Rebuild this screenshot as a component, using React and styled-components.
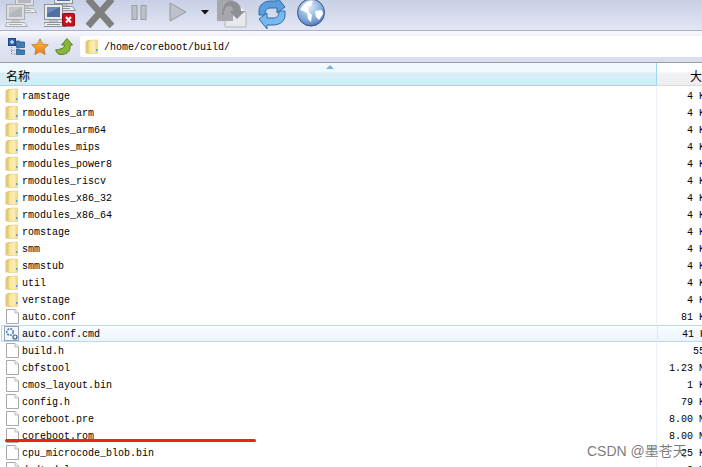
import React from 'react'
import styled, { createGlobalStyle } from 'styled-components'

const GlobalStyle = createGlobalStyle`
  html, body {
    margin: 0;
    padding: 0;
    background: #fff;
    overflow: hidden;
  }
`

const Page = styled.div`
  position: relative;
  width: 702px;
  height: 467px;
  overflow: hidden;
  font-family: "Liberation Mono", "Noto Sans CJK SC", monospace;
  font-size: 10px;
  color: #000;
`

const Toolbar = styled.div`
  height: 30px;
  padding-left: 2px;
  display: flex;
  align-items: flex-end;
  overflow: hidden;
  background: linear-gradient(#c7d0e5, #e3e6f4);
  border-bottom: 1px solid #aab0cc;
`

const Tool = styled.div`
  width: ${p => p.$w}px;
  height: 30px;
  flex: none;
  display: flex;
  justify-content: center;
  align-items: flex-start;
`

const NavBar = styled.div`
  height: 31px;
  padding-left: 8px;
  display: flex;
  align-items: center;
  background: linear-gradient(#f9fafe 0, #e3e6f3 35%, #d9deee 100%);
  border-bottom: 1px solid #9c9ca2;
`

const NavIcons = styled.div`
  display: flex;
  gap: 6px;
  width: 72px;
  flex: none;
  align-items: center;
`

const Location = styled.div`
  flex: 1;
  height: 21px;
  padding-left: 5px;
  display: flex;
  align-items: center;
  gap: 6px;
  background: #fff;
  border-radius: 3px 0 0 3px;
  font-size: 10px;
`

const Label = styled.span`
  padding-top: 2px;
  line-height: 15px;
`

const Header = styled.div`
  height: 23px;
  display: flex;
  position: relative;
  box-sizing: border-box;
`

const NameHead = styled.div`
  width: 657px;
  flex: none;
  box-sizing: border-box;
  padding: 4px 0 0 6px;
  font-family: "Noto Sans CJK SC", sans-serif;
  font-size: 12px;
  line-height: 17px;
  background: linear-gradient(#f1f9fd 0, #eff8fc 42%, #d8eff8 44%, #d2ebf6 100%);
  border-bottom: 1px solid #9dd8ef;
  border-right: 1px solid #9dd8ef;
`

const SizeHead = styled.div`
  flex: 1;
  box-sizing: border-box;
  padding: 4px 0 0 33px;
  font-family: "Noto Sans CJK SC", sans-serif;
  font-size: 12px;
  line-height: 17px;
  white-space: nowrap;
  overflow: hidden;
  background: linear-gradient(#fff 0, #fff 42%, #f3f3f5 44%, #eeeef1 100%);
  border-bottom: 1px solid #d8dade;
`

const SortArrow = styled.div`
  position: absolute;
  left: 326px;
  top: 2px;
  width: 0;
  height: 0;
  border-left: 4px solid transparent;
  border-right: 4px solid transparent;
  border-bottom: 4px solid #7fb2d4;
`

const List = styled.div`
  padding-top: 1px;
`

const Row = styled.div`
  height: 17px;
  display: flex;
  align-items: center;
  box-sizing: border-box;
  white-space: nowrap;
  ${p => p.$selected && `
    margin-left: 1px;
    border: 1px solid #b9d7fb;
    border-right: none;
    border-radius: 2px 0 0 2px;
    background: linear-gradient(#fbfdff, #ebf4fe);
  `}
`

const NameCell = styled.div`
  width: 657px;
  height: 17px;
  flex: none;
  margin-left: ${p => (p.$selected ? -1 : 0)}px;
  box-sizing: border-box;
  padding-left: ${p => (p.$folder ? 5 : p.$selected ? 3 : 6)}px;
  display: flex;
  align-items: center;
  gap: ${p => (p.$folder ? 4 : 3)}px;
  border-right: 1px solid ${p => (p.$selected ? '#dfe8f6' : '#eff1f8')};
`

const SizeCell = styled(Label)`
  width: 60px;
  flex: none;
  text-align: right;
`

const RedLine = styled.div`
  position: absolute;
  left: 5px;
  top: 439px;
  width: 251px;
  height: 3px;
  background: #f0211c;
  border-radius: 2px;
`

const Watermark = styled.div`
  position: absolute;
  left: 587px;
  top: 442px;
  font-family: "Liberation Sans", "Noto Sans CJK SC", sans-serif;
  font-size: 14px;
  line-height: 18px;
  color: rgba(70, 70, 70, 0.72);
  white-space: nowrap;
`

const Monitor = ({ x, y, gray }) => {
  const frame = gray ? '#a9adb0' : '#8d9298'
  const screen = gray ? '#b4b8bc' : '#4f6fa6'
  return (
    <g transform={`translate(${x} ${y})`}>
      <rect x="0.5" y="0.5" width="18" height="15" fill={gray ? '#dcdddd' : '#e9eaea'} stroke={frame} />
      <rect x="3" y="3" width="13" height="10" fill={screen} />
      <path d="M3 3h13l-13 7z" fill="#fff" opacity="0.2" />
      <path d="M6 16h7v2H6z" fill="#d4d6d8" stroke={frame} strokeWidth="0.6" />
      <path d="M0.5 18.5h18l3 4h-22z" fill="#ecedee" stroke={frame} />
      <path d="M3 20.5h13" stroke={frame} />
    </g>
  )
}

const ComputersIcon = () => (
  <svg width="32" height="30" viewBox="0 0 32 30">
    <Monitor x={10} y={-10} gray />
    <Monitor x={1} y={4} gray />
  </svg>
)

const DisconnectIcon = () => (
  <svg width="32" height="30" viewBox="0 0 32 30">
    <Monitor x={10} y={-12} />
    <Monitor x={0} y={4} />
    <rect x="18.5" y="13.5" width="12" height="12.5" rx="1" fill="#cc0f1c" stroke="#8c0f18" />
    <path d="M22 17l5 5.5M27 17l-5 5.5" stroke="#fff" strokeWidth="2" />
  </svg>
)

const StopIcon = () => (
  <svg width="32" height="30" viewBox="0 0 32 30">
    <path d="M4 -1L28 26M28 -1L4 26" stroke="#7f7f7f" strokeWidth="6.5" />
  </svg>
)

const PauseIcon = () => (
  <svg width="16" height="30" viewBox="0 0 16 30">
    <rect x="1" y="5.5" width="5" height="14" fill="#bcc0c8" stroke="#9a9ca2" />
    <rect x="10" y="5.5" width="5" height="14" fill="#bcc0c8" stroke="#9a9ca2" />
  </svg>
)

const PlayIcon = () => (
  <svg width="20" height="30" viewBox="0 0 20 30">
    <path d="M2 3l16 9-16 9z" fill="#bcc1cb" stroke="#95989e" />
  </svg>
)

const DropdownIcon = () => (
  <svg width="8" height="30" viewBox="0 0 8 30">
    <path d="M0 10h8l-4 4.5z" fill="#111" />
  </svg>
)

const DocArrowIcon = () => (
  <svg width="32" height="30" viewBox="0 0 32 30">
    <path d="M9 6h15l6 6v15H9z" fill="#e8e9ec" stroke="#b4b6ba" />
    <path d="M24 6v6h6" fill="#f6f6f7" stroke="#b4b6ba" />
    <rect x="1" y="-2" width="16" height="23" fill="#a6a8ae" />
    <path d="M6 15c0-10 5-15 11-14 5 1 8 5 8 10h4l-8 8-8-8h4c0-3-1-5-4-5-3 0-5 3-5 9z" fill="#8f9095" />
  </svg>
)

const RefreshIcon = () => (
  <svg width="28" height="30" viewBox="0 0 28 30">
    <path d="M1 15V11C1 5 6 1 13 1H19V-3L27 7L19 13V8H13C9 8 7 10 7 15Z" fill="#5a9edd" stroke="#2f6aa8" />
    <path d="M27 11V15C27 21 22 25 15 25H9V29L1 19L9 13V18H15C19 18 21 16 21 11Z" fill="#79b8ec" stroke="#2f6aa8" />
  </svg>
)

const GlobeIcon = () => (
  <svg width="28" height="30" viewBox="0 0 28 30">
    <defs>
      <radialGradient id="sea" cx="0.45" cy="0.3" r="0.85">
        <stop offset="0" stopColor="#dfeaf8" />
        <stop offset="0.65" stopColor="#6f9ed6" />
        <stop offset="1" stopColor="#30508f" />
      </radialGradient>
    </defs>
    <circle cx="14" cy="12.5" r="13.5" fill="url(#sea)" stroke="#3d4f7e" />
    <path d="M3 10c3-6 8-10 13-9l-2 5-3 1 1 5 3 3-1 7-3-3-1-6-4-2zM18 11l7-1 1 4-4 6-3-3z" fill="#fff" />
  </svg>
)

const TreeIcon = () => (
  <svg width="17" height="17" viewBox="0 0 17 17">
    <rect x="0.5" y="0.5" width="7" height="7" fill="#2f63ad" stroke="#1d4486" />
    <path d="M2 4h4M4 2v4" stroke="#fff" />
    <path d="M3.5 9v7h4M3.5 12.5h4" stroke="#8a8f98" strokeDasharray="1 1" fill="none" />
    <path d="M8.5 3h3l1 1h4v5.5h-8z" fill="#3c7cb8" stroke="#23507f" strokeWidth="0.7" />
    <path d="M8.5 11h3l1 1h4v4.5h-8z" fill="#3c7cb8" stroke="#23507f" strokeWidth="0.7" />
  </svg>
)

const StarIcon = () => (
  <svg width="18" height="17" viewBox="0 0 18 17">
    <defs>
      <linearGradient id="star" x1="0" y1="0" x2="0" y2="1">
        <stop offset="0" stopColor="#fbc13a" />
        <stop offset="1" stopColor="#f07a10" />
      </linearGradient>
    </defs>
    <path d="M9 0.8l2.5 5.2 5.8.8-4.2 4 1 5.7L9 13.8l-5.1 2.7 1-5.7-4.2-4 5.8-.8z" fill="url(#star)" stroke="#a87a4a" strokeWidth="0.8" />
  </svg>
)

const UpArrowIcon = () => (
  <svg width="18" height="17" viewBox="0 0 18 17">
    <path d="M12 0.5L17.5 7H15V10C15 14 11 16.5 6 16.5C3 16.5 1 14.5 0.8 11.5C2 12 3 12 5 11C8 10.5 9.5 9.5 9.5 7H6.5Z" fill="#8ab63c" stroke="#4f7a1c" strokeWidth="0.9" />
  </svg>
)

const FolderIcon = () => (
  <svg width="13" height="15" viewBox="0 0 13 15" style={{ flex: 'none' }}>
    <defs>
      <linearGradient id="fold" x1="0" y1="0" x2="1" y2="0">
        <stop offset="0" stopColor="#f7e08e" />
        <stop offset="0.6" stopColor="#fbeeb6" />
        <stop offset="1" stopColor="#efd37c" />
      </linearGradient>
    </defs>
    <path d="M0.5 2.5L3 1h2.5l1 1.5V14.5H0.5z" fill="#e6c874" />
    <path d="M6 1h6.5v13.5H6L3.5 14.5V3z" fill="url(#fold)" stroke="#e2cd86" strokeWidth="0.6" />
    <rect x="11" y="10" width="1.5" height="2" fill="#49a6dc" />
  </svg>
)

const FileIcon = () => (
  <svg width="13" height="15" viewBox="0 0 13 15" style={{ flex: 'none' }}>
    <path d="M0.5 0.5h8.5l3.5 3.5v10.5H0.5z" fill="#fff" stroke="#a8a8a8" />
    <path d="M9 0.5v3.5h3.5" fill="#efefef" stroke="#bdbdbd" />
  </svg>
)

const GearFileIcon = () => (
  <svg width="15" height="15" viewBox="0 0 15 15" style={{ flex: 'none' }}>
    <rect x="0.5" y="0.5" width="14" height="14" fill="#f3f7fb" stroke="#9aa2ac" />
    <circle cx="6" cy="6" r="3.2" fill="none" stroke="#4f7fb8" strokeWidth="1.6" strokeDasharray="2 1" />
    <circle cx="11" cy="11" r="2" fill="none" stroke="#2f5f9c" strokeWidth="1.2" />
  </svg>
)

const rows = [
  { name: 'ramstage', size: '4 KiB', folder: true },
  { name: 'rmodules_arm', size: '4 KiB', folder: true },
  { name: 'rmodules_arm64', size: '4 KiB', folder: true },
  { name: 'rmodules_mips', size: '4 KiB', folder: true },
  { name: 'rmodules_power8', size: '4 KiB', folder: true },
  { name: 'rmodules_riscv', size: '4 KiB', folder: true },
  { name: 'rmodules_x86_32', size: '4 KiB', folder: true },
  { name: 'rmodules_x86_64', size: '4 KiB', folder: true },
  { name: 'romstage', size: '4 KiB', folder: true },
  { name: 'smm', size: '4 KiB', folder: true },
  { name: 'smmstub', size: '4 KiB', folder: true },
  { name: 'util', size: '4 KiB', folder: true },
  { name: 'verstage', size: '4 KiB', folder: true },
  { name: 'auto.conf', size: '81 KiB' },
  { name: 'auto.conf.cmd', size: '41 KiB', selected: true },
  { name: 'build.h', size: '55 B' },
  { name: 'cbfstool', size: '1.23 MiB' },
  { name: 'cmos_layout.bin', size: '1 KiB' },
  { name: 'config.h', size: '79 KiB' },
  { name: 'coreboot.pre', size: '8.00 MiB' },
  { name: 'coreboot.rom', size: '8.00 MiB' },
  { name: 'cpu_microcode_blob.bin', size: '25 KiB' },
  { name: 'dsdt.dsl', size: '8 KiB' },
]

const App = () => {
  return (
    <Page>
      <GlobalStyle />
      <Toolbar>
        <Tool $w={38}><ComputersIcon /></Tool>
        <Tool $w={39}><DisconnectIcon /></Tool>
        <Tool $w={41}><StopIcon /></Tool>
        <Tool $w={38}><PauseIcon /></Tool>
        <Tool $w={40}><PlayIcon /></Tool>
        <Tool $w={13}><DropdownIcon /></Tool>
        <Tool $w={42}><DocArrowIcon /></Tool>
        <Tool $w={38}><RefreshIcon /></Tool>
        <Tool $w={39}><GlobeIcon /></Tool>
      </Toolbar>
      <NavBar>
        <NavIcons>
          <TreeIcon />
          <StarIcon />
          <UpArrowIcon />
        </NavIcons>
        <Location>
          <FolderIcon />
          <Label>/home/coreboot/build/</Label>
        </Location>
      </NavBar>
      <Header>
        <NameHead>名称</NameHead>
        <SizeHead>大小</SizeHead>
        <SortArrow />
      </Header>
      <List>
        {rows.map(r => (
          <Row key={r.name} $selected={r.selected}>
            <NameCell $folder={r.folder} $selected={r.selected}>
              {r.folder ? <FolderIcon /> : r.selected ? <GearFileIcon /> : <FileIcon />}
              <Label>{r.name}</Label>
            </NameCell>
            <SizeCell>{r.size}</SizeCell>
          </Row>
        ))}
      </List>
      <RedLine />
      <Watermark>CSDN @墨苍天</Watermark>
    </Page>
  )
}

export default App
